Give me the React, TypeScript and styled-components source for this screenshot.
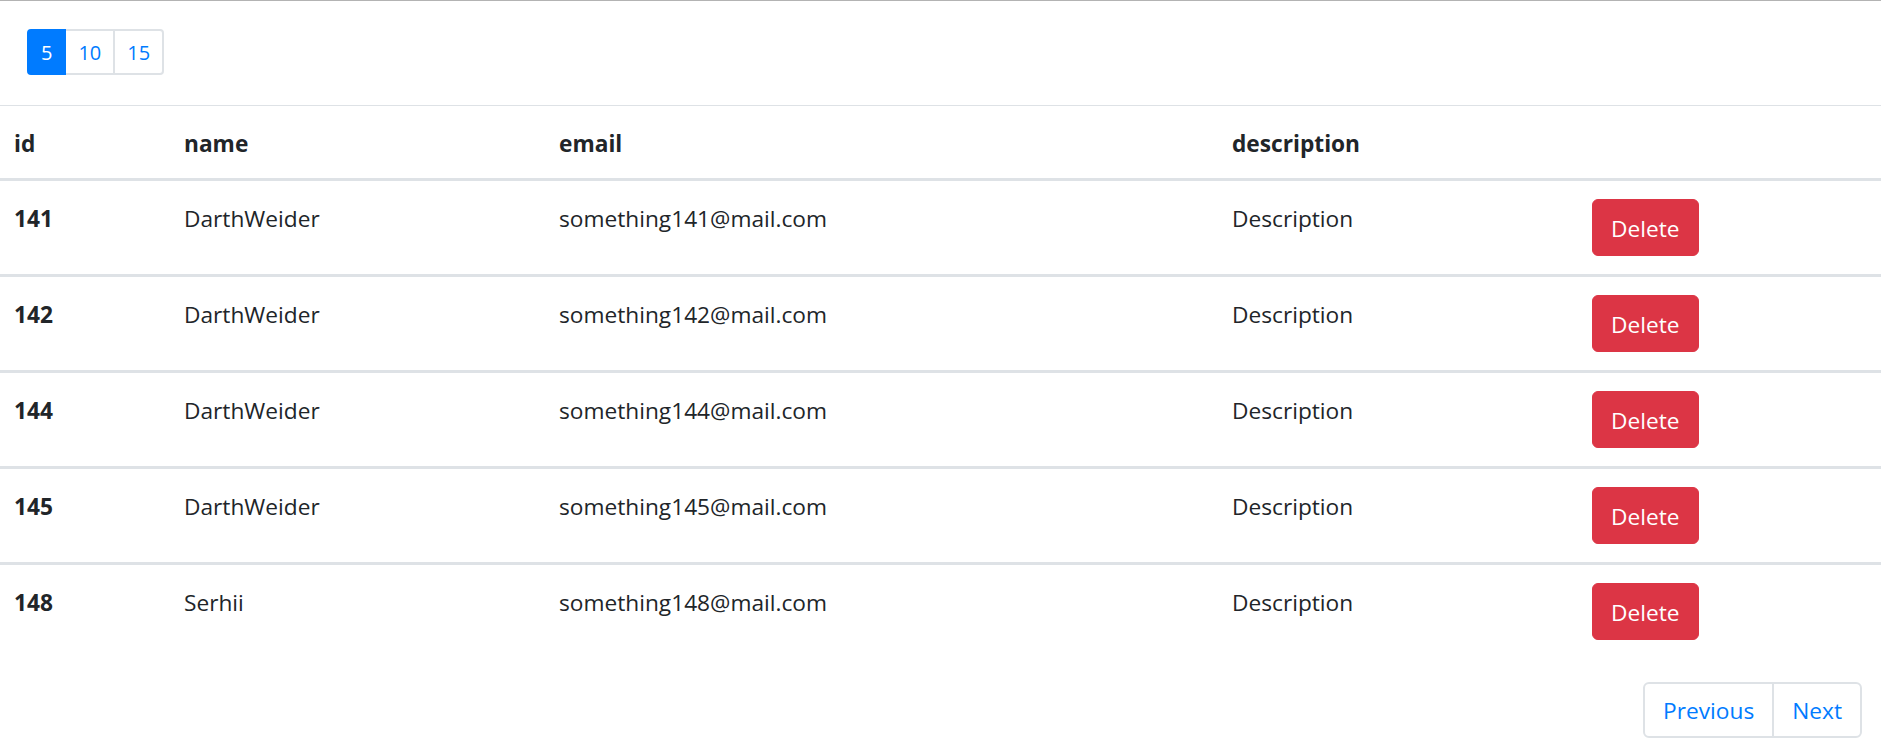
import React from "react";
import styled, { createGlobalStyle } from "styled-components";

const GlobalStyle = createGlobalStyle`
  *, *::before, *::after {
    box-sizing: border-box;
  }
  html, body {
    margin: 0;
    padding: 0;
    background: #ffffff;
  }
  body {
    border-top: 1px solid #b3b3b3;
    font-family: "Open Sans", "Noto Sans", sans-serif;
    color: #212529;
    overflow: hidden;
  }
`;

const Page = styled.div`
  width: 1881px;
  display: flex;
  flex-direction: column;
`;

const SizeBar = styled.div`
  display: flex;
  padding: 28px 0 0 27px;
  margin-bottom: 30px;
`;

const SizeList = styled.ul`
  display: flex;
  list-style: none;
  margin: 0;
  padding: 0;
`;

const SizeItem = styled.li<{ $active?: boolean; $first?: boolean; $last?: boolean }>`
  display: block;
  margin-left: ${(p) => (p.$first ? "0" : "-2px")};
  padding: 7px 12px 5px;
  font-size: 20px;
  line-height: 30px;
  border: 2px solid ${(p) => (p.$active ? "#007bff" : "#dee2e6")};
  background: ${(p) => (p.$active ? "#007bff" : "#ffffff")};
  color: ${(p) => (p.$active ? "#ffffff" : "#007bff")};
  position: relative;
  z-index: ${(p) => (p.$active ? 1 : 0)};
  border-radius: ${(p) => (p.$first ? "4px 0 0 4px" : p.$last ? "0 4px 4px 0" : "0")};
`;

const Table = styled.table`
  width: 1881px;
  border-collapse: collapse;
  table-layout: fixed;
  font-size: 22.7px;
  line-height: 36px;
`;

const HeadCell = styled.th<{ $w: number }>`
  width: ${(p) => p.$w}px;
  text-align: left;
  font-weight: 700;
  padding: 20px 18px 16px;
  border-top: 1px solid #dee2e6;
  border-bottom: 3px solid #dee2e6;
  vertical-align: bottom;
  &:first-child {
    padding-left: 14px;
  }
`;

const Row = styled.tr<{ $first?: boolean }>`
  border-top: ${(p) => (p.$first ? "0" : "3px solid #dee2e6")};
`;

const Cell = styled.td<{ $bold?: boolean; $action?: boolean }>`
  padding: ${(p) => (p.$action ? "18px" : "20px 18px 16px")};
  vertical-align: top;
  font-weight: ${(p) => (p.$bold ? 700 : 400)};
  &:first-child {
    padding-left: 14px;
  }
`;

const DeleteButton = styled.button`
  font-family: inherit;
  font-size: 22.7px;
  line-height: 37px;
  padding: 10px 18px 8px;
  color: #ffffff;
  background: #dc3545;
  border: 1px solid #dc3545;
  border-radius: 6px;
  cursor: pointer;
  display: block;
`;

const Footer = styled.div`
  display: flex;
  justify-content: flex-end;
  padding: 24px 19px 0 0;
`;

const PageList = styled.ul`
  display: flex;
  list-style: none;
  margin: 0;
  padding: 0;
`;

const PageLink = styled.li<{ $first?: boolean; $last?: boolean }>`
  display: block;
  margin-left: ${(p) => (p.$first ? "0" : "-2px")};
  padding: 12px 18px 10px;
  font-size: 22.7px;
  line-height: 30px;
  color: #007bff;
  background: #ffffff;
  border: 2px solid #dee2e6;
  border-radius: ${(p) => (p.$first ? "6px 0 0 6px" : p.$last ? "0 6px 6px 0" : "0")};
`;

const columns = [
  { key: "id", label: "id", w: 166 },
  { key: "name", label: "name", w: 375 },
  { key: "email", label: "email", w: 673 },
  { key: "description", label: "description", w: 360 },
  { key: "action", label: "", w: 307 },
];

const rows = [
  { id: 141, name: "DarthWeider" },
  { id: 142, name: "DarthWeider" },
  { id: 144, name: "DarthWeider" },
  { id: 145, name: "DarthWeider" },
  { id: 148, name: "Serhii" },
];

const sizes = [5, 10, 15];

export default function App() {
  return (
    <Page>
      <GlobalStyle />
      <SizeBar>
        <SizeList>
          {sizes.map((s, i) => (
            <SizeItem key={s} $active={i === 0} $first={i === 0} $last={i === sizes.length - 1}>
              {s}
            </SizeItem>
          ))}
        </SizeList>
      </SizeBar>
      <Table>
        <thead>
          <tr>
            {columns.map((c) => (
              <HeadCell key={c.key} $w={c.w}>
                {c.label}
              </HeadCell>
            ))}
          </tr>
        </thead>
        <tbody>
          {rows.map((r, i) => (
            <Row key={r.id} $first={i === 0}>
              <Cell $bold>{r.id}</Cell>
              <Cell>{r.name}</Cell>
              <Cell>{`something${r.id}@mail.com`}</Cell>
              <Cell>Description</Cell>
              <Cell $action>
                <DeleteButton type="button">Delete</DeleteButton>
              </Cell>
            </Row>
          ))}
        </tbody>
      </Table>
      <Footer>
        <PageList>
          <PageLink $first>Previous</PageLink>
          <PageLink $last>Next</PageLink>
        </PageList>
      </Footer>
    </Page>
  );
}
